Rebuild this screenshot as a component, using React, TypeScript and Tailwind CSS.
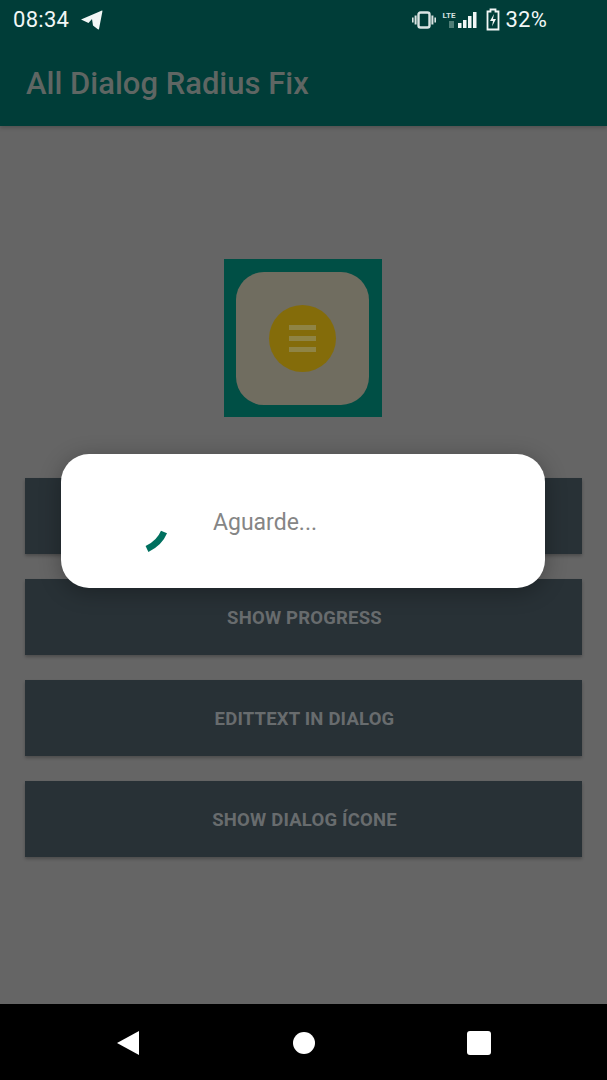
// first button's label sits fully behind the dialog, so it isn't drawn
const buttons = ['', 'SHOW PROGRESS', 'EDITTEXT IN DIALOG', 'SHOW DIALOG ÍCONE'];

function StatusBar() {
  return (
    <div className="h-10 flex items-center justify-between pl-[13px] pr-[60px] text-[#f2f7f6] text-[22px] leading-none">
      <div className="flex items-center gap-[11px]">
        <span className="tracking-[0.3px]">08:34</span>
        <svg width="23" height="20" viewBox="0 0 22 20" fill="currentColor">
          <path d="M0.5 9.5 L21.5 0.5 C22 0.5 22 1 21.8 2 L18.5 19 C18 19.8 17.5 19.5 17 19 L12.5 15.5 L11.5 9 L8 13 Z" />
        </svg>
      </div>
      <div className="flex items-center">
        <svg width="24" height="20" viewBox="0 0 24 20" fill="currentColor" className="opacity-90">
          <rect x="6.5" y="2.5" width="11" height="15" rx="2" fill="none" stroke="currentColor" strokeWidth="2.4" />
          <rect x="2.6" y="5.5" width="2" height="9" />
          <rect x="19.4" y="5.5" width="2" height="9" />
          <rect x="0" y="7.5" width="1.6" height="5" />
          <rect x="22.4" y="7.5" width="1.6" height="5" />
        </svg>
        <div className="relative ml-[7px] w-[35px] h-5">
          <span className="absolute left-0 top-[2px] text-[8px] font-bold leading-none text-[#d5e2e0]">LTE</span>
          <svg width="35" height="20" viewBox="0 0 35 20" fill="currentColor">
            <rect x="6" y="11" width="5" height="7" fill="#4f7d76" />
            <rect x="15" y="13" width="3.5" height="5" />
            <rect x="20" y="10" width="3.5" height="8" />
            <rect x="25" y="6" width="3.5" height="12" />
            <rect x="30" y="2" width="3.5" height="16" />
          </svg>
        </div>
        <svg width="14" height="24" viewBox="0 0 14 24" fill="none" stroke="currentColor" className="ml-[8px]">
          <path d="M4.5 1.5 H9.5 V3.5 H12.5 V21.5 H1.5 V3.5 H4.5 Z" strokeWidth="1.8" />
          <path d="M8 6 L4 13 H7 L6 18.5 L10 11 H7 Z" fill="currentColor" stroke="none" />
        </svg>
        <span className="ml-[6px] tracking-[0.2px]">32%</span>
      </div>
    </div>
  );
}

function Logo() {
  return (
    <div className="w-[158px] h-[158px] mr-[1px] pr-[1px] bg-[#004f45] flex items-center justify-center">
      <div className="w-[133px] h-[133px] rounded-[28px] bg-[#706d60] flex items-center justify-center">
        <div className="w-[67px] h-[67px] rounded-full bg-[#846c0a] flex flex-col items-center justify-center gap-[6px]">
          <div className="w-[27px] h-[5px] bg-[#8f8445]" />
          <div className="w-[27px] h-[5px] bg-[#8f8445]" />
          <div className="w-[27px] h-[5px] bg-[#8f8445]" />
        </div>
      </div>
    </div>
  );
}

function ProgressDialog() {
  return (
    <div className="absolute left-[61px] top-[454px] w-[484px] h-[134px] bg-white rounded-[28px] shadow-[0_4px_22px_rgba(0,0,0,0.3)] flex items-start pl-[79px] pt-[50px]">
      <svg width="30" height="32" viewBox="0 0 30 32" className="mt-[20px]">
        <path d="M24 8 Q19.5 19 7 25" fill="none" stroke="#00705f" strokeWidth="6.5" />
      </svg>
      <span className="ml-[43px] text-[23px] leading-[36px] mt-[1px] text-[#858585]">Aguarde...</span>
    </div>
  );
}

export default function App() {
  return (
    <div className="relative w-[607px] h-[1080px] overflow-hidden bg-[#656565] flex flex-col font-['Roboto',sans-serif]">
      <div className="h-[126px] bg-[#003d38] shadow-[0_2px_4px_rgba(0,0,0,0.2)]">
        <StatusBar />
        <div className="h-[86px] flex items-center pl-[26px] pt-[2px] text-[31px] font-medium text-[#5f6663]">
          All Dialog Radius Fix
        </div>
      </div>
      <div className="flex-1 flex flex-col items-center pt-[133px]">
        <Logo />
        <div className="mt-[61px] flex flex-col gap-[25px]">
          {buttons.map((label, i) => (
            <div
              key={i}
              className="w-[557px] h-[76px] pl-[2px] pt-[4px] bg-[#283136] shadow-[0_2px_3px_rgba(0,0,0,0.25)] flex items-center justify-center text-[18.5px] font-bold tracking-[0.2px] text-[#686c6e]"
            >
              {label}
            </div>
          ))}
        </div>
      </div>
      <div className="h-[76px] bg-black flex items-center">
        <div className="w-full h-[26px] mt-[1px]">
          <svg width="607" height="26" viewBox="0 0 607 26" fill="white">
            <path d="M117 13 L139 1 V25 Z" />
            <circle cx="304" cy="13" r="11" />
            <rect x="467" y="1" width="24" height="24" rx="3" />
          </svg>
        </div>
      </div>
      <ProgressDialog />
    </div>
  );
}
